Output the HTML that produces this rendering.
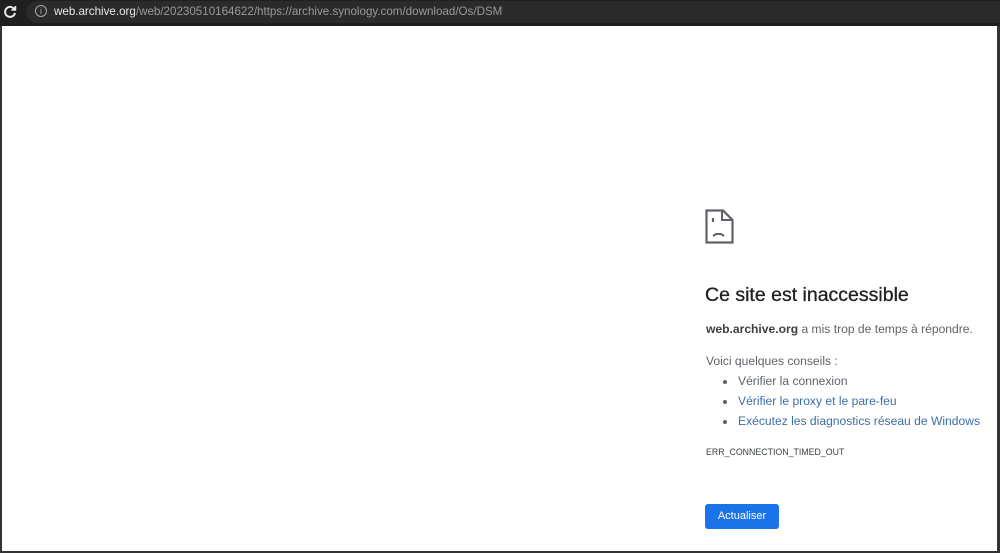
<!DOCTYPE html>
<html><head><meta charset="utf-8"><style>
*{margin:0;padding:0;box-sizing:border-box}
html,body{width:1000px;height:553px;overflow:hidden;background:#fff;font-family:"Liberation Sans",sans-serif}
#bar{position:absolute;left:0;top:0;width:1000px;height:26px;background:#1f1f1f}
#pill{position:absolute;left:26px;top:1px;width:1000px;height:22px;background:#2b2b2b;border-radius:11px}
#info{position:absolute;left:35px;top:5px;width:12px;height:12px;border:1px solid #aaa;border-radius:50%;color:#aaa;font-size:9px;text-align:center;line-height:10px}
#url{position:absolute;left:54px;top:5px;font-size:11.6px;color:#9a9a9a;white-space:nowrap}
#url b{color:#e8e8e8;font-weight:normal}
#frame{position:absolute;left:0;top:26px;width:1000px;height:527px;border-left:2px solid #333;border-right:3px solid #333;border-bottom:2px solid #333}
.t{position:absolute;left:706px;white-space:nowrap;color:#5f6368;font-size:12.1px}
h1{position:absolute;left:705px;top:284px;font-size:19.5px;font-weight:normal;color:#202124;white-space:nowrap;-webkit-text-stroke:0.3px #202124}
.li{left:738px}
.dot{position:absolute;left:723px;width:4px;height:4px;border-radius:50%;background:#5f6368}
.lk{color:#3c6ea6}
#btn{position:absolute;left:705px;top:504px;width:74px;height:25px;background:#1a73e8;border-radius:3px;color:#fff;font-size:11px;text-align:center;line-height:25px}
</style></head><body>
<div id="bar">
<svg style="position:absolute;left:3px;top:5px" width="14" height="14" viewBox="0 0 14 14" fill="none" stroke="#e8e8e8" stroke-width="2"><path d="M11.5 4.5A5 5 0 1 0 12 8"/><path d="M12.5 1V5H8.5" fill="#e8e8e8" stroke-width="1.5"/></svg>
<div id="pill"></div><div id="info">i</div>
<div id="url"><b>web.archive.org</b>/web/20230510164622/https://archive.synology.com/download/Os/DSM</div></div>
<div id="frame"></div>
<svg style="position:absolute;left:705px;top:209px" width="30" height="36" viewBox="0 0 30 36" fill="none" stroke="#5f6368" stroke-width="2.2">
<path d="M1.5 1.5H18L27.5 11V33.5H1.5Z"/><path d="M17 1.5V11H27.5" stroke-width="2"/>
<path d="M8 9V13" /><path d="M8 27L11 25H16L19 27" stroke-width="2"/>
</svg>
<h1>Ce site est inaccessible</h1>
<div class="t" style="top:322px"><b style="color:#3c4043">web.archive.org</b> a mis trop de temps à répondre.</div>
<div class="t" style="top:354px">Voici quelques conseils :</div>
<div class="dot" style="top:380px"></div><div class="t li" style="top:374px">Vérifier la connexion</div>
<div class="dot" style="top:400px"></div><div class="t li lk" style="top:394px">Vérifier le proxy et le pare-feu</div>
<div class="dot" style="top:420px"></div><div class="t li lk" style="top:414px">Exécutez les diagnostics réseau de Windows</div>
<div class="t" style="top:447px;font-size:8.8px;color:#3c4043">ERR_CONNECTION_TIMED_OUT</div>
<div id="btn">Actualiser</div>
</body></html>
